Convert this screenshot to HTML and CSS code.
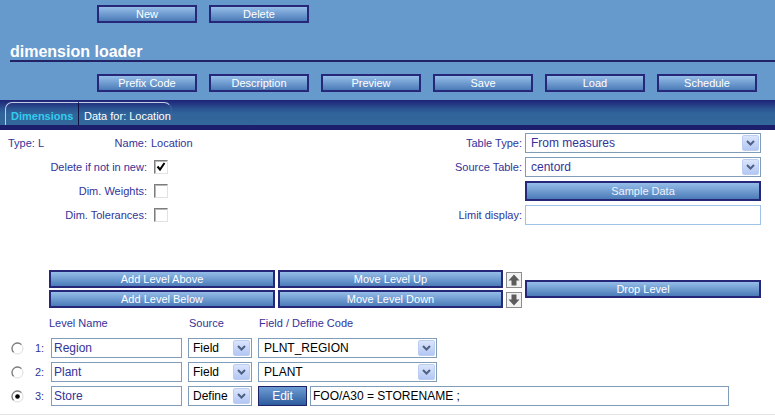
FILE: index.html
```html
<!DOCTYPE html>
<html>
<head>
<meta charset="utf-8">
<title>dimension loader</title>
<link rel="stylesheet" href="styles.css">
</head>
<body>
<div class="page">
  <header class="header">
    <div class="btnrow">
      <button class="btn">New</button>
      <button class="btn">Delete</button>
    </div>
    <h1 class="title">dimension loader</h1>
    <div class="btnrow second">
      <button class="btn">Prefix Code</button>
      <button class="btn">Description</button>
      <button class="btn">Preview</button>
      <button class="btn">Save</button>
      <button class="btn">Load</button>
      <button class="btn">Schedule</button>
    </div>
  </header>

  <nav class="tabbar">
    <div class="tab active">Dimensions</div>
    <div class="tab second">Data for: Location</div>
  </nav>

  <main class="content">
    <section class="props">
      <div class="lbl split"><span>Type: <span class="val">L</span></span><span>Name:</span></div>
      <div class="val cellval">Location</div>
      <div class="rlbl">Table Type:</div>
      <div class="sel"><span class="sel-text">From measures</span><span class="sel-btn"><svg width="9" height="6" viewBox="0 0 9 6"><path d="M1 1l3.5 3.5L8 1" fill="none" stroke="#4d6185" stroke-width="2"/></svg></span></div>

      <div class="lbl">Delete if not in new:</div>
      <div class="cellval"><span class="cb"><svg width="10" height="10" viewBox="0 0 10 10"><path d="M1.5 4.5l2.5 3 4.5-6.5" fill="none" stroke="#000" stroke-width="2"/></svg></span></div>
      <div class="rlbl">Source Table:</div>
      <div class="sel"><span class="sel-text">centord</span><span class="sel-btn"><svg width="9" height="6" viewBox="0 0 9 6"><path d="M1 1l3.5 3.5L8 1" fill="none" stroke="#4d6185" stroke-width="2"/></svg></span></div>

      <div class="lbl">Dim. Weights:</div>
      <div class="cellval"><span class="cb"></span></div>
      <div class="rlbl"></div>
      <button class="btn wide">Sample Data</button>

      <div class="lbl">Dim. Tolerances:</div>
      <div class="cellval"><span class="cb"></span></div>
      <div class="rlbl">Limit display:</div>
      <input class="txt light" type="text" value="">
    </section>

    <section class="levelbtns">
      <button class="btn lb">Add Level Above</button>
      <button class="btn lb">Move Level Up</button>
      <span class="arrowbtn"><svg width="16" height="16" viewBox="0 0 16 16"><rect x=".5" y=".5" width="15" height="15" fill="#f2f2f2" stroke="#8c8c8c"/><path d="M8 2.5L13.5 8.5H10.5V13.5H5.5V8.5H2.5Z" fill="#5c5c5c"/></svg></span>
      <button class="btn lb drop">Drop Level</button>
      <button class="btn lb">Add Level Below</button>
      <button class="btn lb">Move Level Down</button>
      <span class="arrowbtn"><svg width="16" height="16" viewBox="0 0 16 16"><rect x=".5" y=".5" width="15" height="15" fill="#f2f2f2" stroke="#8c8c8c"/><path d="M8 13.5L13.5 7.5H10.5V2.5H5.5V7.5H2.5Z" fill="#5c5c5c"/></svg></span>
    </section>

    <section class="levels">
      <div class="lhead">
        <span class="h-name">Level Name</span>
        <span class="h-src">Source</span>
        <span class="h-field">Field / Define Code</span>
      </div>

      <div class="lrow">
        <span class="radio"><svg width="13" height="13" viewBox="0 0 13 13"><circle cx="6.5" cy="6.5" r="5.5" fill="#fff" stroke="#dcdcdc"/><path d="M2.6 10.4A5.5 5.5 0 0 1 10.4 2.6" fill="none" stroke="#7c7c7c" stroke-width="1.3"/></svg></span>
        <span class="num">1:</span>
        <input class="txt name" type="text" value="Region">
        <div class="sel src"><span class="sel-text blk">Field</span><span class="sel-btn"><svg width="9" height="6" viewBox="0 0 9 6"><path d="M1 1l3.5 3.5L8 1" fill="none" stroke="#4d6185" stroke-width="2"/></svg></span></div>
        <div class="sel field"><span class="sel-text blk">PLNT_REGION</span><span class="sel-btn"><svg width="9" height="6" viewBox="0 0 9 6"><path d="M1 1l3.5 3.5L8 1" fill="none" stroke="#4d6185" stroke-width="2"/></svg></span></div>
      </div>

      <div class="lrow">
        <span class="radio"><svg width="13" height="13" viewBox="0 0 13 13"><circle cx="6.5" cy="6.5" r="5.5" fill="#fff" stroke="#dcdcdc"/><path d="M2.6 10.4A5.5 5.5 0 0 1 10.4 2.6" fill="none" stroke="#7c7c7c" stroke-width="1.3"/></svg></span>
        <span class="num">2:</span>
        <input class="txt name" type="text" value="Plant">
        <div class="sel src"><span class="sel-text blk">Field</span><span class="sel-btn"><svg width="9" height="6" viewBox="0 0 9 6"><path d="M1 1l3.5 3.5L8 1" fill="none" stroke="#4d6185" stroke-width="2"/></svg></span></div>
        <div class="sel field"><span class="sel-text blk">PLANT</span><span class="sel-btn"><svg width="9" height="6" viewBox="0 0 9 6"><path d="M1 1l3.5 3.5L8 1" fill="none" stroke="#4d6185" stroke-width="2"/></svg></span></div>
      </div>

      <div class="lrow">
        <span class="radio"><svg width="13" height="13" viewBox="0 0 13 13"><circle cx="6.5" cy="6.5" r="5.5" fill="#fff" stroke="#dcdcdc"/><path d="M2.6 10.4A5.5 5.5 0 0 1 10.4 2.6" fill="none" stroke="#7c7c7c" stroke-width="1.3"/><circle cx="6.5" cy="6.5" r="2.3" fill="#000"/></svg></span>
        <span class="num">3:</span>
        <input class="txt name" type="text" value="Store">
        <div class="sel src"><span class="sel-text blk">Define</span><span class="sel-btn"><svg width="9" height="6" viewBox="0 0 9 6"><path d="M1 1l3.5 3.5L8 1" fill="none" stroke="#4d6185" stroke-width="2"/></svg></span></div>
        <button class="editbtn">Edit</button>
        <input class="txt code" type="text" value="FOO/A30 = STORENAME ;">
      </div>
    </section>
  </main>
</div>
</body>
</html>
```

FILE: styles.css
```css
* { box-sizing: border-box; margin: 0; padding: 0; }
html, body { width: 775px; height: 415px; overflow: hidden; background: #fff; }
body {
  font-family: "Liberation Sans", Arial, sans-serif;
  font-size: 11px;
  color: #333399;
}
.page { height: 415px; border-bottom: 1px solid #e4e4e4; }

/* header */
.header { background: #6699cc; height: 100px; padding-top: 5px; }
.btnrow { display: flex; gap: 12px; padding-left: 97px; }
.btnrow.second { margin-top: 12px; }
.btn {
  width: 100px; height: 18px;
  border: 2px solid #27277a;
  background: linear-gradient(#95bde8, #4b7bb8);
  color: #fff;
  font-family: "Liberation Sans", Arial, sans-serif;
  font-size: 11px;
  display: flex; align-items: center; justify-content: center;
  line-height: 1;
}
.title {
  margin: 21px 0 0 10px;
  font-size: 16px; font-weight: bold; line-height: 16px;
  color: #fff;
  border-bottom: 2px solid #222266;
}

/* tabs */
.tabbar {
  height: 30px;
  display: flex; align-items: flex-end;
  padding: 2px 0 5px 5px;
  background: linear-gradient(#1e2277 0px, #2b5592 9px, #31659b 14px, #336699 25px, #1c1f6b 25px, #1c1f6b 30px);
}
.tab {
  height: 23px; line-height: 13px; padding-top: 7px;
  color: #fff; font-size: 11px;
}
.tab.active {
  width: 74px; padding-left: 5px;
  color: #33ccee; font-weight: bold;
  border-top: 1px solid #c4cbe2; border-left: 1px solid #c4cbe2;
  border-right: 1px solid #0d1040;
  border-top-left-radius: 7px;
}
.tab.second {
  width: 93px; padding-left: 5px;
  border-top: 1px solid #c4cbe2;
  border-right: 1px solid #33669a;
  border-top-right-radius: 8px;
}

/* properties */
.content { padding-top: 3px; }
.props {
  display: grid;
  grid-template-columns: 139px 1fr 150px 236px;
  grid-auto-rows: 20px;
  row-gap: 4px;
  padding: 0 14px 0 8px;
}
.lbl { display: flex; align-items: center; justify-content: flex-end; }
.lbl.split { justify-content: space-between; }
.cellval { display: flex; align-items: center; padding-left: 4px; }
.rlbl { display: flex; align-items: center; justify-content: flex-end; padding-right: 3px; }
.cb {
  width: 14px; height: 14px; margin-left: 3px;
  background: #fff;
  border: 1px solid; border-color: #7d7d7d #e2e2e2 #e2e2e2 #7d7d7d;
  box-shadow: inset 1px 1px 0 #b8b8b8;
  display: flex; align-items: center; justify-content: center;
}
.btn.wide { width: 236px; height: 20px; color: #eef2fb; }

/* select */
.sel {
  display: flex; align-items: center;
  height: 20px; padding: 1px;
  border: 1px solid #7f9db9; background: #fff;
}
.sel-text { flex: 1; padding-left: 4px; font-size: 12px; color: #333399; white-space: nowrap; overflow: hidden; }
.sel-text.blk { color: #000; }
.sel-btn {
  width: 17px; height: 16px; flex: none;
  background: linear-gradient(#dbe5fc, #b3c7f4);
  border: 1px solid #bccdf2; border-radius: 2px;
  display: flex; align-items: center; justify-content: center;
}
.txt {
  height: 20px; border: 1px solid #7f9db9; background: #fff;
  font-family: "Liberation Sans", Arial, sans-serif; font-size: 12px;
  color: #333399; padding: 0 2px; outline: none;
}
.txt.light { width: 236px; border-color: #9fc2e9; }

/* level buttons */
.levelbtns {
  display: grid;
  grid-template-columns: 226px 225px 16px 236px;
  grid-template-rows: 18px 18px;
  gap: 2px 3px;
  margin: 45px 0 0 49px;
}
.btn.lb { width: auto; }
.btn.drop { grid-column: 4; grid-row: 1 / 3; align-self: center; }
.arrowbtn { width: 16px; height: 16px; align-self: end; display: flex; }

/* levels table */
.lhead { display: flex; margin-top: 9px; line-height: 13px; }
.h-name { margin-left: 49px; width: 140px; }
.h-src { width: 70px; }
.lrow { display: flex; align-items: center; height: 20px; }
.lhead + .lrow { margin-top: 8px; }
.lrow + .lrow { margin-top: 4px; }
.radio { width: 13px; height: 13px; margin-left: 11px; display: flex; }
.num { width: 16px; margin-left: 11px; font-size: 11px; }
.txt.name { width: 131px; }
.sel.src { width: 64px; margin-left: 6px; }
.sel.src .sel-text { padding-left: 3px; }
.sel.field { width: 179px; margin-left: 6px; }
.editbtn {
  width: 49px; height: 20px; margin-left: 6px;
  border: 1px solid #1e2266;
  background: linear-gradient(#6e9cd4, #2c5c9d);
  color: #fff; font-family: "Liberation Sans", Arial, sans-serif; font-size: 12px;
}
.txt.code { width: 419px; margin-left: 3px; color: #000; }
```
